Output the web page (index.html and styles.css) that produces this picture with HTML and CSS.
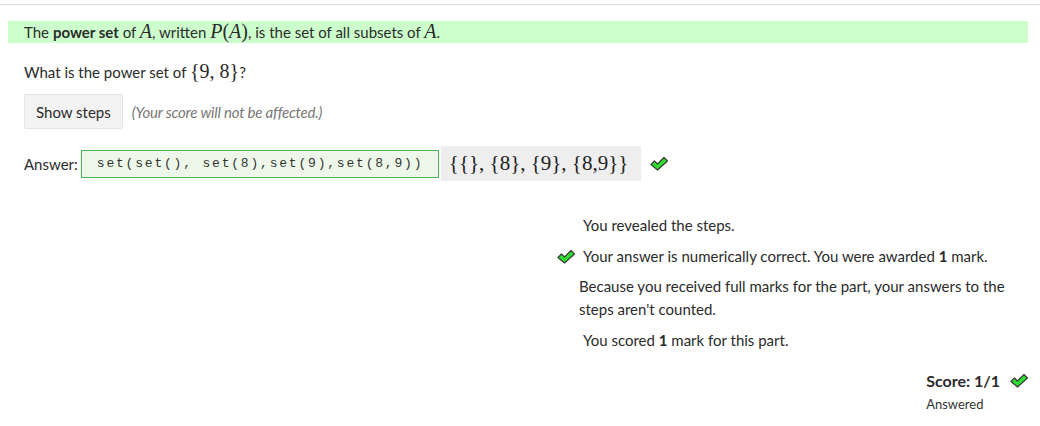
FILE: index.html
```html
<!DOCTYPE html>
<html>
<head>
<meta charset="utf-8">
<link rel="stylesheet" href="styles.css">
</head>
<body>
<div class="topline"></div>
<div class="content">
  <p class="statement">The <b>power set</b> of <span class="m">A</span>, written <span class="m">P</span><span class="mr">(</span><span class="m">A</span><span class="mr">)</span>, is the set of all subsets of <span class="m">A</span>.</p>
  <p class="prompt">What is the power set of <span class="mr">{9, 8}</span>?</p>
  <div class="steps">
    <button class="btn">Show steps</button>
    <span class="note">(Your score will not be affected.)</span>
  </div>
  <div class="answer">
    <span class="label">Answer:</span>
    <span class="input">set(set(), set(8),set(9),set(8,9))</span>
    <span class="preview">{{}, {8}, {9}, {8,9}}</span>
    <svg class="tick" viewBox="0 0 18 15" width="18" height="15"><path d="M1 8.5 L4.5 5 L7.5 8 L14 1.5 L17.5 5 L7.5 14 Z" fill="#2ee02e" stroke="#3a3a3a" stroke-width="1.2" stroke-linejoin="round"/></svg>
  </div>
  <div class="feedback-wrap">
    <ul class="feedback">
      <li class="fb sp">You revealed the steps.</li>
      <li class="fb sp"><svg class="fbtick" viewBox="0 0 18 15" width="18" height="15"><path d="M1 8.5 L4.5 5 L7.5 8 L14 1.5 L17.5 5 L7.5 14 Z" fill="#2ee02e" stroke="#3a3a3a" stroke-width="1.2" stroke-linejoin="round"/></svg>Your answer is numerically correct. You were awarded <b>1</b> mark.</li>
      <li class="fb">Because you received full marks for the part, your answers to the steps aren't counted.</li>
      <li class="fb sp">You scored <b>1</b> mark for this part.</li>
    </ul>
  </div>
  <div class="score-wrap">
    <div class="score">
      <div class="score-line"><b>Score: 1/1</b><svg class="stick" viewBox="0 0 18 15" width="18" height="15"><path d="M1 8.5 L4.5 5 L7.5 8 L14 1.5 L17.5 5 L7.5 14 Z" fill="#2ee02e" stroke="#3a3a3a" stroke-width="1.2" stroke-linejoin="round"/></svg></div>
      <div class="answered">Answered</div>
    </div>
  </div>
</div>
</body>
</html>
```
FILE: styles.css
```css
body {
  margin: 0;
  font-family: Lato, "Open Sans", sans-serif;
  font-size: 15px;
  color: #2b2b2b;
  background: #fff;
}
.topline {
  margin-top: 4px;
  border-top: 1px solid #dcdcdc;
}
.content {
  padding: 0 12px 0 8px;
}
.statement {
  margin: 16px 0 0;
  background: #ccffcc;
  padding: 0 16px;
  line-height: 22px;
  height: 22px;
}
.m {
  font-family: "Liberation Serif", serif;
  font-style: italic;
  font-size: 20px;
  line-height: 0;
}
.mr {
  font-family: "Liberation Serif", serif;
  font-size: 20px;
  line-height: 0;
}
.prompt {
  margin: 18px 0 0;
  padding-left: 16px;
  line-height: 22px;
}
.steps {
  margin-top: 11px;
  padding-left: 16px;
  display: flex;
  align-items: center;
}
.btn {
  height: 35px;
  padding: 0 11px;
  background: #f3f3f3;
  border: 1px solid #e4e4e4;
  border-radius: 2px;
  font-family: inherit;
  font-size: 15px;
  color: #2b2b2b;
}
.note {
  margin-left: 9px;
  font-style: italic;
  font-size: 15px;
  color: #777;
  letter-spacing: -0.2px;
}
.answer {
  margin-top: 17px;
  padding-left: 16px;
  display: flex;
  align-items: center;
}
.label {
  margin-right: 3px;
}
.input {
  box-sizing: border-box;
  width: 358px;
  height: 28px;
  border: 1px solid #4cb84c;
  background: #eef8ea;
  font-family: "Liberation Mono", monospace;
  font-size: 13px;
  letter-spacing: 1.8px;
  line-height: 26px;
  padding-left: 15px;
  white-space: pre;
  color: #333;
}
.preview {
  box-sizing: border-box;
  margin-left: 2px;
  height: 35px;
  width: 200px;
  background: #eeeeee;
  font-family: "Liberation Serif", serif;
  font-size: 21px;
  line-height: 35px;
  padding-left: 8px;
  color: #222;
  white-space: pre;
}
.tick {
  margin-left: 9px;
}
.feedback-wrap {
  display: flex;
  justify-content: flex-end;
  margin-top: 33px;
}
.feedback {
  list-style: none;
  margin: 0;
  padding: 0;
  width: 471px;
}
.fb {
  position: relative;
  line-height: 23px;
  padding-left: 22px;
  margin-bottom: 7.5px;
}
.fb.sp {
  padding-left: 26px;
}
.fbtick {
  position: absolute;
  left: 0;
  top: 4px;
}
.score-wrap {
  display: flex;
  justify-content: flex-end;
  margin-top: 10px;
}
.score {
  white-space: nowrap;
}
.score-line {
  display: flex;
  align-items: center;
  font-size: 16px;
  line-height: 23px;
}
.stick {
  margin-left: 10px;
}
.answered {
  font-size: 13px;
  line-height: 23px;
  margin-top: 1px;
  color: #333;
}
```
